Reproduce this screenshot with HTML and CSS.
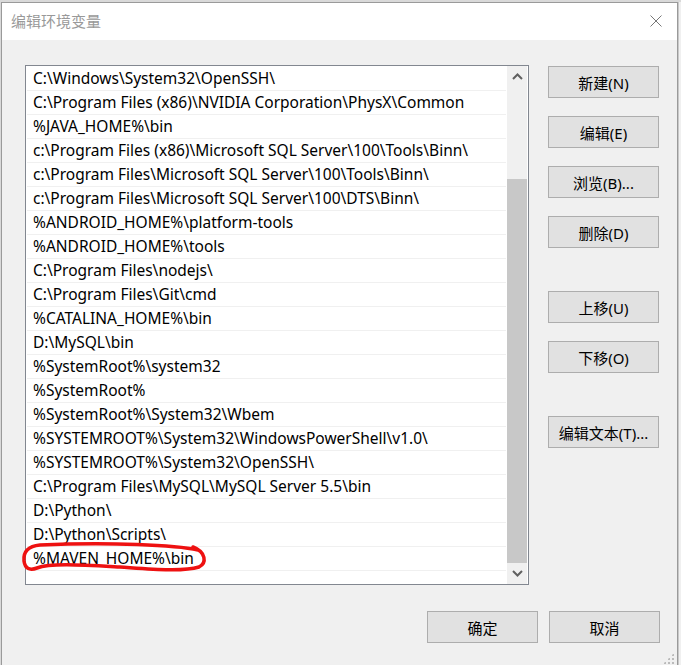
FILE: index.html
```html
<!DOCTYPE html>
<html lang="zh-CN">
<head>
    <meta charset="UTF-8">
    <meta name="viewport" content="width=device-width, initial-scale=1.0">
    <title>编辑环境变量</title>
    <link rel="stylesheet" href="styles.css">
</head>
<body>
    <div class="desktop">
        <div class="dialog">
            <div class="title-bar">
                <span class="title">编辑环境变量</span>
                <svg class="close" width="12" height="12" viewBox="0 0 12 12">
                    <path d="M0.5 0.5 L11.5 11.5 M11.5 0.5 L0.5 11.5" stroke="#777" stroke-width="1" fill="none"/>
                </svg>
            </div>
            <div class="dialog-body">
                <div class="main-row">
                    <div class="path-list">
                        <ul class="rows">
                            <li>C:\Windows\System32\OpenSSH\</li>
                            <li>C:\Program Files (x86)\NVIDIA Corporation\PhysX\Common</li>
                            <li>%JAVA_HOME%\bin</li>
                            <li>c:\Program Files (x86)\Microsoft SQL Server\100\Tools\Binn\</li>
                            <li>c:\Program Files\Microsoft SQL Server\100\Tools\Binn\</li>
                            <li>c:\Program Files\Microsoft SQL Server\100\DTS\Binn\</li>
                            <li>%ANDROID_HOME%\platform-tools</li>
                            <li>%ANDROID_HOME%\tools</li>
                            <li>C:\Program Files\nodejs\</li>
                            <li>C:\Program Files\Git\cmd</li>
                            <li>%CATALINA_HOME%\bin</li>
                            <li>D:\MySQL\bin</li>
                            <li>%SystemRoot%\system32</li>
                            <li>%SystemRoot%</li>
                            <li>%SystemRoot%\System32\Wbem</li>
                            <li>%SYSTEMROOT%\System32\WindowsPowerShell\v1.0\</li>
                            <li>%SYSTEMROOT%\System32\OpenSSH\</li>
                            <li>C:\Program Files\MySQL\MySQL Server 5.5\bin</li>
                            <li>D:\Python\</li>
                            <li>D:\Python\Scripts\</li>
                            <li>%MAVEN_HOME%\bin</li>
                            <li class="empty"></li>
                        </ul>
                        <div class="scrollbar">
                            <div class="arrow">
                                <svg width="11" height="7" viewBox="0 0 11 7">
                                    <path d="M1 6 L5.5 1.5 L10 6" stroke="#606060" stroke-width="2" fill="none"/>
                                </svg>
                            </div>
                            <div class="track-top"></div>
                            <div class="thumb"></div>
                            <div class="arrow">
                                <svg width="11" height="7" viewBox="0 0 11 7">
                                    <path d="M1 1 L5.5 5.5 L10 1" stroke="#606060" stroke-width="2" fill="none"/>
                                </svg>
                            </div>
                        </div>
                    </div>
                    <div class="side-buttons">
                        <button class="btn">新建(N)</button>
                        <button class="btn">编辑(E)</button>
                        <button class="btn">浏览(B)...</button>
                        <button class="btn">删除(D)</button>
                        <button class="btn group-start">上移(U)</button>
                        <button class="btn">下移(O)</button>
                        <button class="btn group-start">编辑文本(T)...</button>
                    </div>
                </div>
                <div class="footer">
                    <button class="btn">确定</button>
                    <button class="btn">取消</button>
                </div>
                <div class="grip"></div>
            </div>
        </div>
        <div class="behind"></div>
    </div>

    <svg class="annotation" width="681" height="665" viewBox="0 0 681 665">
        <path d="M198 550 C176 545 110 542 40 545 C28 546 23 552 24 561 C25 568 29 571 37 568 C50 563 82 565 120 567 C150 569 182 572 199 567 C207 563 206 552 193 547"
              stroke="#ee1111" stroke-width="3.5" fill="none" stroke-linecap="round"/>
    </svg>
</body>
</html>
```

FILE: styles.css
```css
* {
    margin: 0;
    padding: 0;
    box-sizing: border-box;
}

body {
    width: 681px;
    height: 665px;
    overflow: hidden;
    background-color: #d9d9d9;
    font-family: "Noto Sans", "Noto Sans CJK SC", sans-serif;
    font-size: 15.5px;
    color: #000;
}

.desktop {
    display: flex;
    height: 665px;
    padding-top: 2px;
}

.dialog {
    margin-left: 1px;
    width: 677px;
    height: 670px;
    border: 1px solid #9a9a9a;
    border-bottom: none;
    background-color: #f0f0f0;
    display: flex;
    flex-direction: column;
}

.behind {
    flex: 1;
    background-color: #f0f0f0;
    border-left: 1px solid #c8c8c8;
}

.title-bar {
    height: 37px;
    background-color: #fff;
    display: flex;
    align-items: center;
    justify-content: space-between;
    padding: 0 15px 2px 9px;
}

.title {
    color: #999;
    font-size: 15px;
}

.close {
    display: block;
}

.dialog-body {
    position: relative;
    flex: 1;
    padding: 25px 17px 0 23px;
}

.main-row {
    display: flex;
    gap: 19px;
}

.path-list {
    width: 504px;
    height: 520px;
    border: 1px solid #828790;
    background-color: #fff;
    padding: 1px;
    display: flex;
    overflow: hidden;
}

.rows {
    list-style: none;
    flex: 1;
    padding-right: 1px;
}

.rows li {
    height: 24px;
    line-height: 22px;
    padding-left: 6px;
    border-bottom: 1px solid #f0f0f0;
    white-space: nowrap;
}

.rows li.empty {
    border-bottom: none;
}

.scrollbar {
    width: 20px;
    margin-top: -1px;
    margin-bottom: -1px;
    background-color: #f0f0f0;
    display: flex;
    flex-direction: column;
}

.arrow {
    height: 21px;
    display: flex;
    align-items: center;
    justify-content: center;
}

.track-top {
    height: 92px;
}

.thumb {
    flex: 1;
    background-color: #c8c8c8;
}

.side-buttons {
    display: flex;
    flex-direction: column;
    gap: 18px;
    padding-top: 1px;
}

.btn {
    width: 111px;
    height: 32px;
    background-color: #e1e1e1;
    border: 1px solid #adadad;
    font-family: "Noto Sans", "Noto Sans CJK SC", sans-serif;
    font-size: 15px;
    color: #000;
}

.side-buttons .group-start {
    margin-top: 25px;
}

.footer {
    display: flex;
    justify-content: flex-end;
    gap: 11px;
    margin-top: 26px;
}

.grip {
    position: absolute;
    right: 3px;
    bottom: 8px;
    width: 11px;
    height: 11px;
    background-image: radial-gradient(#bbb 1px, transparent 1.5px);
    background-size: 4px 4px;
    clip-path: polygon(100% 0, 100% 100%, 0 100%);
}

.annotation {
    position: absolute;
    top: 0;
    left: 0;
    pointer-events: none;
}
```
